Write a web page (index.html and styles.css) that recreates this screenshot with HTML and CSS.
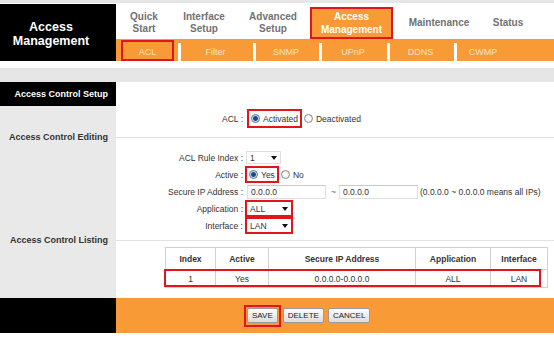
FILE: index.html
```html
<!DOCTYPE html>
<html>
<head>
  <meta charset="UTF-8">
  <title>Access Management</title>
  <link rel="stylesheet" href="styles.css">
</head>
<body>
  <div class="topline"></div>
  <div class="head">
    <div class="brand">Access<br>Management</div>
    <div class="menus">
      <div class="nav">
        <div class="tab t1">Quick<br>Start</div>
        <div class="tab t2">Interface<br>Setup</div>
        <div class="tab t3">Advanced<br>Setup</div>
        <div class="tab t4 cur">Access<br>Management</div>
        <div class="tab t5">Maintenance</div>
        <div class="tab t6">Status</div>
      </div>
      <div class="sub">
        <div class="si s1"><span class="mark">ACL</span></div>
        <div class="si s2">Filter</div>
        <div class="si s3">SNMP</div>
        <div class="si s4">UPnP</div>
        <div class="si s5">DDNS</div>
        <div class="si s6">CWMP</div>
      </div>
    </div>
  </div>
  <div class="band"></div>

  <div class="row">
    <div class="side dark">Access Control Setup</div>
    <div class="main"></div>
  </div>
  <div class="row r-acl">
    <div class="side"></div>
    <div class="main">
      <div class="f">
        <div class="lbl">ACL :</div>
        <span class="mark pick acl-pick"><span class="rd on"></span>Activated</span>
        <span class="rd"></span>Deactivated
      </div>
    </div>
  </div>
  <div class="row r-title">
    <div class="side">Access Control Editing</div>
    <div class="main"><div class="hr"></div></div>
  </div>
  <div class="row r-fields">
    <div class="side"></div>
    <div class="main">
      <div class="f">
        <div class="lbl">ACL Rule Index :</div>
        <span class="sel idx">1<span class="arr"></span></span>
      </div>
      <div class="f">
        <div class="lbl">Active :</div>
        <span class="mark pick"><span class="rd on"></span>Yes</span>
        <span class="rd"></span>No
      </div>
      <div class="f">
        <div class="lbl">Secure IP Address :</div>
        <span class="inp">0.0.0.0</span>
        <span class="tilde">~</span>
        <span class="inp">0.0.0.0</span>
        <span class="hint">(0.0.0.0 ~ 0.0.0.0 means all IPs)</span>
      </div>
      <div class="f">
        <div class="lbl">Application :</div>
        <span class="mark sel wide">ALL<span class="arr"></span></span>
      </div>
      <div class="f">
        <div class="lbl">Interface :</div>
        <span class="mark sel wide">LAN<span class="arr"></span></span>
      </div>
    </div>
  </div>
  <div class="row r-title">
    <div class="side">Access Control Listing</div>
    <div class="main"><div class="hr"></div></div>
  </div>
  <div class="row r-list">
    <div class="side"></div>
    <div class="main">
      <div class="tbl-wrap">
        <table class="tbl">
          <tr>
            <th class="c1">Index</th>
            <th class="c2">Active</th>
            <th class="c3">Secure IP Address</th>
            <th class="c4">Application</th>
            <th class="c5">Interface</th>
          </tr>
          <tr>
            <td>1</td>
            <td>Yes</td>
            <td>0.0.0.0-0.0.0.0</td>
            <td>ALL</td>
            <td>LAN</td>
          </tr>
        </table>
        <div class="rowmark"></div>
      </div>
    </div>
  </div>

  <div class="foot">
    <div class="foot-side"></div>
    <div class="foot-main">
      <span class="mark btnmark"><span class="btn">SAVE</span></span>
      <span class="btn">DELETE</span>
      <span class="btn">CANCEL</span>
    </div>
  </div>
</body>
</html>
```

FILE: styles.css
```css
body { margin: 0; font-family: "Liberation Sans", Arial, sans-serif; background: #fff; color: #333; }
.topline { height: 3px; background: #e6e6e6; margin-bottom: 1px; }

.head { display: flex; height: 57px; }
.brand { width: 116px; flex: none; box-sizing: border-box; padding: 3px 14px 0 0; background: #000; color: #fff; font-weight: bold; font-size: 12.5px; line-height: 14px; text-align: center; display: flex; align-items: center; justify-content: center; }
.menus { flex: 1; display: flex; flex-direction: column; }
.nav { height: 35px; display: flex; }
.tab { display: flex; align-items: center; justify-content: center; text-align: center; font-size: 10px; font-weight: bold; color: #727272; line-height: 12px; padding-top: 2px; box-sizing: border-box; }
.t1 { width: 56px; }
.t2 { width: 64px; }
.t3 { width: 74px; }
.t4 { width: 83px; }
.t5 { width: 92px; }
.t6 { width: 46px; }
.tab.cur { margin-top: 3px; height: 32px; padding-top: 0; background: #f89a36; border: 2px solid #e3141c; color: #fff; line-height: 13px; box-sizing: border-box; }

.sub { height: 22px; background: #f89a36; display: flex; }
.si { display: flex; align-items: center; justify-content: center; font-size: 9px; color: #fde2c4; padding-top: 3px; box-sizing: border-box; background: linear-gradient(#fff, #fff) left bottom / 3px 18px no-repeat; }
.s1 { width: 62px; background: none; padding: 1px 4px 0 5px; }
.s2 { width: 75px; }
.s3 { width: 66px; }
.s4 { width: 68px; }
.s5 { width: 67px; }
.s6 { width: 58px; }
.s1 .mark { flex: 1; height: 100%; display: flex; align-items: center; justify-content: center; padding-top: 2px; }

.mark { border: 2px solid #e3141c; box-sizing: border-box; }

.band { margin-top: 7px; height: 14px; background: #e6e6e6; }

.row { display: flex; }
.side { width: 116px; flex: none; box-sizing: border-box; padding-right: 8px; background: #e9e9e9; font-size: 9px; font-weight: bold; color: #333; text-align: right; }
.side.dark { height: 24px; line-height: 24px; background: #000; color: #fff; }
.main { flex: 1; }

.r-acl .main { height: 25px; display: flex; align-items: center; }
.r-title { height: 12px; }
.r-title .side { line-height: 12px; }
.r-title .main { display: flex; align-items: center; }
.hr { flex: 1; height: 1px; background: #e2e2e2; }
.r-fields .main { padding: 6px 0 0; }

.f { display: flex; align-items: center; height: 17px; font-size: 8.5px; color: #333; }
.r-acl .f { height: 19px; }
.lbl { width: 127px; text-align: right; margin-right: 2px; }
.pick { display: flex; align-items: center; height: 17px; padding: 0 2px; margin-right: 2px; }
.acl-pick { height: 19px; margin-left: 2px; }
.rd { display: inline-block; width: 7px; height: 7px; border: 1px solid #8c8c8c; border-radius: 50%; background: radial-gradient(circle, #fff 30%, #d9d9d9); margin-right: 3px; }
.rd.on { background: radial-gradient(circle, #1b4a8c 0 2px, #9fb6d4 2.6px, #fff 3.5px); border-color: #566e8e; }

.sel { display: flex; align-items: center; justify-content: space-between; height: 13px; box-sizing: border-box; padding: 0 3px 0 3px; }
.sel.idx { width: 35px; margin-left: 1px; border: 1px solid #dedede; }
.sel.wide { width: 48px; height: 17px; }
.arr { width: 0; height: 0; border-left: 3.5px solid transparent; border-right: 3.5px solid transparent; border-top: 4px solid #111; }

.inp { width: 79px; height: 14px; box-sizing: border-box; border: 1px solid #e0e0e0; border-top-color: #c9c9c9; padding: 0 3px; line-height: 12px; margin-left: 2px; }
.tilde { margin: 0 3px 0 5px; color: #666; }
.inp + .tilde + .inp { margin-left: 0; }
.hint { margin-left: 2px; }

.r-list .main { height: 52px; }
.tbl-wrap { position: relative; margin: 1px 0 0 49px; width: 383px; }
.tbl { border-collapse: collapse; width: 383px; font-size: 8.5px; color: #333; }
.tbl th, .tbl td { border: 1px solid #d2d2d2; text-align: center; padding: 0; }
.tbl th { height: 21px; font-weight: bold; }
.tbl td { height: 17px; }
.c1 { width: 49px; }
.c2 { width: 52px; }
.c3 { width: 146px; }
.c4 { width: 74px; }
.rowmark { position: absolute; left: -1px; top: 22px; width: 377px; height: 18px; border: 2px solid #e3141c; box-sizing: border-box; }

.foot { display: flex; height: 35px; }
.foot-side { width: 116px; flex: none; background: #000; }
.foot-main { flex: 1; background: #f89a36; display: flex; align-items: center; padding-left: 128px; }
.btnmark { display: flex; align-items: center; height: 22px; padding: 0 1px; margin-right: 2px; }
.btn { display: inline-block; height: 15px; line-height: 13px; box-sizing: border-box; padding: 0 4px; margin-right: 4px; border: 1px solid #9a9a9a; border-radius: 2px; background: linear-gradient(#fdfdfd, #dcdcdc); font-size: 8px; color: #222; }
.btnmark .btn { margin-right: 0; }
```
